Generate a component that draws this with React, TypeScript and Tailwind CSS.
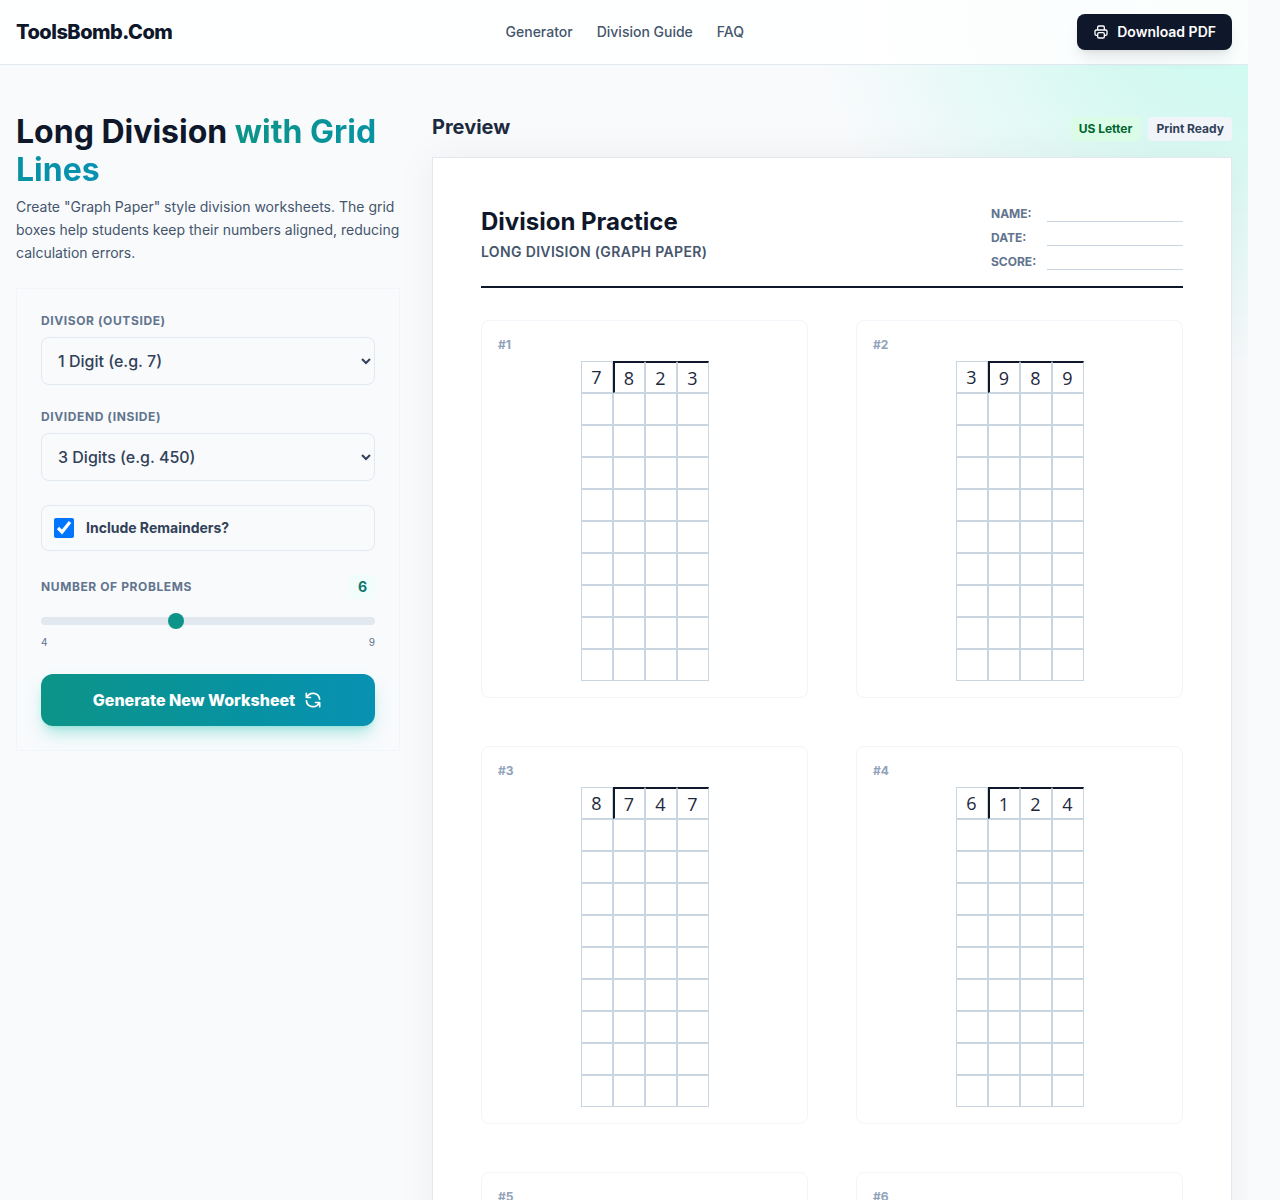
import { useState } from "react";

const NAV_LINKS = [
  { label: "Generator", href: "#generator" },
  { label: "Division Guide", href: "#guide" },
  { label: "FAQ", href: "#faq" },
];

const PROBLEMS = [
  { divisor: "7", dividend: "823" },
  { divisor: "3", dividend: "989" },
  { divisor: "8", dividend: "747" },
  { divisor: "6", dividend: "124" },
  { divisor: "5", dividend: "638" },
  { divisor: "4", dividend: "915" },
];

const WORK_ROWS = 9;

function PrinterIcon() {
  return (
    <svg
      className="h-4 w-4"
      viewBox="0 0 24 24"
      fill="none"
      stroke="currentColor"
      strokeWidth="2"
      strokeLinecap="round"
      strokeLinejoin="round"
      aria-hidden="true"
    >
      <path d="M17 17h2a2 2 0 002-2v-4a2 2 0 00-2-2H5a2 2 0 00-2 2v4a2 2 0 002 2h2m2 4h6a2 2 0 002-2v-4a2 2 0 00-2-2H9a2 2 0 00-2 2v4a2 2 0 002 2zm8-12V5a2 2 0 00-2-2H9a2 2 0 00-2 2v4h10z" />
    </svg>
  );
}

function RefreshIcon() {
  return (
    <svg
      className="h-5 w-5"
      viewBox="0 0 24 24"
      fill="none"
      stroke="currentColor"
      strokeWidth="2"
      strokeLinecap="round"
      strokeLinejoin="round"
      aria-hidden="true"
    >
      <path d="M4 4v5h.582m15.356 2A8.001 8.001 0 004.582 9m0 0H9m11 11v-5h-.581m0 0a8.003 8.003 0 01-15.357-2m15.357 2H15" />
    </svg>
  );
}

function Header() {
  return (
    <header className="border-b border-slate-200 bg-white/90">
      <div className="flex h-16 items-center justify-between px-4">
        <a href="#" className="text-xl font-extrabold tracking-tight text-slate-900">
          ToolsBomb.Com
        </a>
        <nav className="flex gap-6 text-sm font-medium text-slate-600">
          {NAV_LINKS.map((link) => (
            <a key={link.href} href={link.href}>
              {link.label}
            </a>
          ))}
        </nav>
        <button
          type="button"
          className="flex items-center gap-2 rounded-lg bg-slate-900 px-4 py-2 text-sm font-semibold text-white shadow-lg shadow-slate-900/10"
        >
          <PrinterIcon />
          Download PDF
        </button>
      </div>
    </header>
  );
}

function SelectField({ id, label, options }: { id: string; label: string; options: string[] }) {
  return (
    <div>
      <label
        htmlFor={id}
        className="mb-2 block text-xs font-bold uppercase tracking-wider text-slate-500"
      >
        {label}
      </label>
      <select
        id={id}
        className="h-12 w-full rounded-lg border border-slate-200 bg-slate-50 px-3 text-base font-medium text-slate-700"
      >
        {options.map((option) => (
          <option key={option}>{option}</option>
        ))}
      </select>
    </div>
  );
}

function Controls() {
  const [remainders, setRemainders] = useState(true);
  const [count, setCount] = useState(6);

  return (
    <section id="generator" className="w-96 shrink-0">
      <h1 className="text-[32px] leading-[38px] font-bold text-slate-900">
        Long Division{" "}
        <span className="bg-linear-to-r from-[#0d9488] to-[#0891b2] bg-clip-text text-transparent">
          with Grid Lines
        </span>
      </h1>
      <p className="mt-1.5 text-sm leading-[23px] text-slate-600">
        Create "Graph Paper" style division worksheets. The grid boxes help students keep their
        numbers aligned, reducing calculation errors.
      </p>

      <form
        className="mt-6 space-y-6 border border-slate-100 p-6"
        onSubmit={(e) => e.preventDefault()}
      >
        <SelectField
          id="divisor"
          label="Divisor (Outside)"
          options={["1 Digit (e.g. 7)", "2 Digits (e.g. 12)"]}
        />
        <SelectField
          id="dividend"
          label="Dividend (Inside)"
          options={["3 Digits (e.g. 450)", "4 Digits (e.g. 4500)"]}
        />

        <label className="flex items-center gap-3 rounded-lg border border-slate-200 bg-slate-50 p-3 text-sm leading-5 font-bold text-slate-700">
          <input
            type="checkbox"
            className="h-5 w-5"
            checked={remainders}
            onChange={(e) => setRemainders(e.target.checked)}
          />
          Include Remainders?
        </label>

        <div>
          <div className="mb-[18px] flex items-center justify-between">
            <label
              htmlFor="count"
              className="text-xs font-bold uppercase tracking-wider text-slate-500"
            >
              Number of Problems
            </label>
            <output className="rounded bg-[#f0fdfa] px-2 py-0.5 text-sm font-bold text-[#0f766e]">
              {count}
            </output>
          </div>
          <input
            id="count"
            type="range"
            min={4}
            max={9}
            value={count}
            onChange={(e) => setCount(Number(e.target.value))}
            className="mb-[9px] block h-2 w-full appearance-none rounded-lg bg-slate-200 [&::-webkit-slider-thumb]:h-4 [&::-webkit-slider-thumb]:w-4 [&::-webkit-slider-thumb]:appearance-none [&::-webkit-slider-thumb]:rounded-full [&::-webkit-slider-thumb]:bg-[#0d9488]"
          />
          <div className="flex justify-between text-[10px] leading-4 text-slate-500">
            <span>4</span>
            <span>9</span>
          </div>
        </div>

        <button
          type="submit"
          className="flex h-13 w-full items-center justify-center gap-2 rounded-xl bg-linear-to-r from-[#0d9488] to-[#0891b2] text-base font-extrabold text-white shadow-lg shadow-teal-500/30"
        >
          Generate New Worksheet
          <RefreshIcon />
        </button>
      </form>
    </section>
  );
}

function ProblemCard({
  number,
  divisor,
  dividend,
}: {
  number: number;
  divisor: string;
  dividend: string;
}) {
  const blanks = Array.from({ length: WORK_ROWS * (dividend.length + 1) });

  return (
    <li className="rounded-lg border border-slate-100 p-4">
      <div className="mb-2 text-xs font-bold text-slate-400">#{number}</div>
      <div className="mx-auto grid w-fit grid-cols-4 font-['Open_Sans',sans-serif] text-lg text-slate-800">
        <span className="flex h-8 w-8 items-center justify-center border border-slate-300">
          {divisor}
        </span>
        {dividend.split("").map((digit, i) => (
          <span
            key={i}
            className={
              i === 0
                ? "flex h-8 w-8 items-center justify-center border border-t-2 border-l-2 border-slate-300 border-t-slate-900 border-l-slate-900"
                : "flex h-8 w-8 items-center justify-center border border-t-2 border-slate-300 border-t-slate-900"
            }
          >
            {digit}
          </span>
        ))}
        {blanks.map((_, i) => (
          <span key={i} className="h-8 w-8 border border-slate-300" />
        ))}
      </div>
    </li>
  );
}

function Worksheet() {
  return (
    <div className="border border-slate-200 bg-white p-12 shadow-[0_0_40px_rgba(0,0,0,0.05)]">
      <div className="flex items-end justify-between border-b-2 border-slate-900 pb-4">
        <div className="pb-2">
          <h3 className="text-2xl font-bold text-slate-900">Division Practice</h3>
          <p className="mt-1 text-sm leading-5 font-semibold uppercase tracking-wide text-slate-600">
            Long Division (Graph Paper)
          </p>
        </div>
        <dl className="grid w-48 grid-cols-[56px_1fr] gap-y-2 text-xs leading-4 font-bold uppercase text-slate-500">
          <dt>Name:</dt>
          <dd className="border-b border-slate-300" />
          <dt>Date:</dt>
          <dd className="border-b border-slate-300" />
          <dt>Score:</dt>
          <dd className="border-b border-slate-300" />
        </dl>
      </div>

      <ol className="mt-8 grid grid-cols-2 gap-12">
        {PROBLEMS.map((problem, i) => (
          <ProblemCard key={i} number={i + 1} {...problem} />
        ))}
      </ol>
    </div>
  );
}

export default function App() {
  return (
    <div className="bg-slate-50 pr-8 font-['Inter',sans-serif]">
      {/* overflow-hidden keeps the sheet's shadow inside the content column */}
      <div className="overflow-hidden bg-[radial-gradient(ellipse_430px_360px_at_100%_0%,#ccfbf1,#d5f9f1_35%,transparent)]">
        <Header />
        <main className="flex items-start gap-8 px-4 pt-12 pb-12">
          <Controls />
          <section className="min-w-0 flex-1">
            <div className="mb-4 flex items-end justify-between">
              <h2 className="text-xl font-bold text-slate-800">Preview</h2>
              <div className="flex gap-2 text-xs font-bold">
                <span className="rounded bg-green-100 px-2 py-1 text-green-800">US Letter</span>
                <span className="rounded bg-slate-100 px-2 py-1 text-slate-700">Print Ready</span>
              </div>
            </div>
            <Worksheet />
          </section>
        </main>
      </div>
    </div>
  );
}
